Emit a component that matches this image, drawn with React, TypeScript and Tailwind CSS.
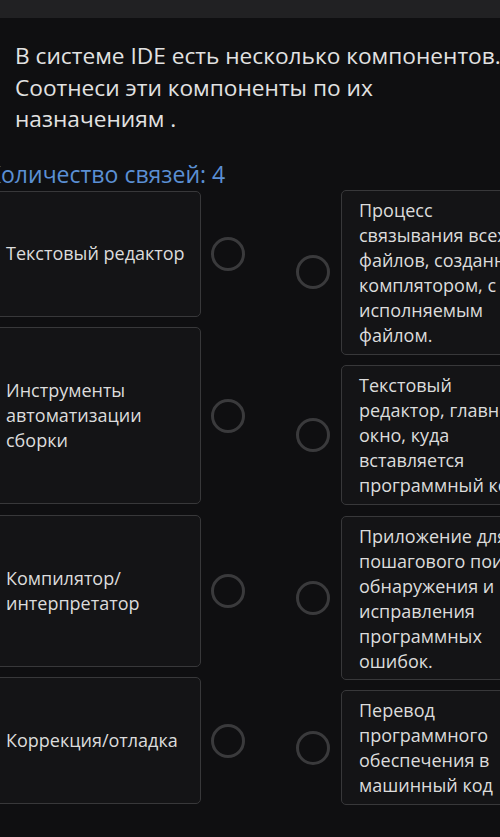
const leftItems = [
  { text: "Текстовый редактор", h: "h-[126px]" },
  { text: "Инструменты\nавтоматизации\nсборки", h: "h-[177px]" },
  { text: "Компилятор/\nинтерпретатор", h: "h-[152px]" },
  { text: "Коррекция/отладка", h: "h-[127px]" },
];

const rightItems = [
  {
    text: "Процесс\nсвязывания всех\nфайлов, созданных\nкомплятором, с\nисполняемым\nфайлом.",
    h: "h-[165px]",
  },
  {
    text: "Текстовый\nредактор, главное\nокно, куда\nвставляется\nпрограммный код",
    h: "h-[140px]",
  },
  {
    text: "Приложение для\nпошагового поиска,\nобнаружения и\nисправления\nпрограммных\nошибок.",
    h: "h-[164px]",
  },
  {
    text: "Перевод\nпрограммного\nобеспечения в\nмашинный код",
    h: "h-[115px]",
  },
];

function Circle() {
  return (
    <div className="w-[34px] h-[34px] shrink-0 rounded-full border-[3px] border-[#3a3a3c]" />
  );
}

export default function App() {
  return (
    <div
      className="w-[500px] h-[837px] overflow-hidden bg-[#0f0f11] text-[#dcdcdc]"
      style={{ fontFamily: '"Open Sans", "Noto Sans", sans-serif' }}
    >
      <div className="h-[18px] bg-[#212123]" />
      <div className="pl-[15px] mt-[22px] text-[22.7px] leading-[31.5px] text-[#e2e2e2] whitespace-nowrap">
        <div>В системе IDE есть несколько компонентов.</div>
        <div>Соотнеси эти компоненты по их</div>
        <div>назначениям .</div>
      </div>
      <div className="ml-[-13px] mt-[25px] text-[23px] leading-[28px] text-[#5b8fd4] whitespace-nowrap">
        Количество связей: 4
      </div>

      <div className="flex mt-[2px] ml-[-12px]">
        <div className="flex flex-col gap-[10.5px] pt-[1px]">
          {leftItems.map((it) => (
            <div key={it.text} className="flex items-center gap-[10px]">
              <div
                className={`w-[213px] ${it.h} shrink-0 flex items-center rounded-[5px] border border-[#38383a] bg-[#141416] pl-[17px] pr-1 text-[18px] leading-[25px] whitespace-pre-line`}
              >
                {it.text}
              </div>
              <Circle />
            </div>
          ))}
        </div>

        <div className="flex flex-col gap-[10.5px] ml-[51px]">
          {rightItems.map((it) => (
            <div key={it.text} className="flex items-center gap-[11px]">
              <Circle />
              <div
                className={`w-[214px] ${it.h} shrink-0 rounded-[5px] border border-[#38383a] bg-[#141416] pt-[7px] pl-[17px] pr-1 text-[18px] leading-[25px] whitespace-pre-line`}
              >
                {it.text}
              </div>
            </div>
          ))}
        </div>
      </div>
    </div>
  );
}
